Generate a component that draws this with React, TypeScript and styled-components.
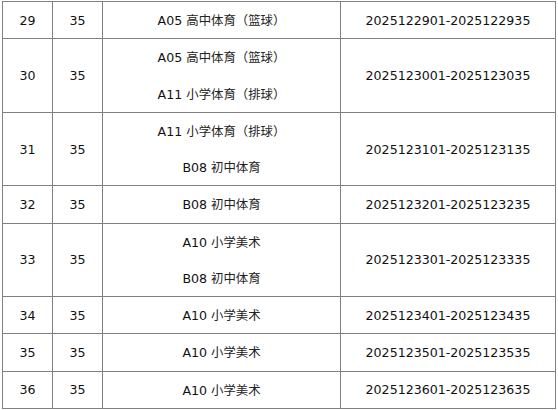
import React from "react";
import styled, { createGlobalStyle } from "styled-components";

interface Subject {
  code: string;
  name: string;
}

interface Row {
  no: number;
  count: number;
  subjects: Subject[];
  range: string;
}

const s = (code: string, name: string): Subject => ({ code, name });

const rows: Row[] = [
  { no: 29, count: 35, subjects: [s("A05", "高中体育（篮球）")], range: "2025122901-2025122935" },
  { no: 30, count: 35, subjects: [s("A05", "高中体育（篮球）"), s("A11", "小学体育（排球）")], range: "2025123001-2025123035" },
  { no: 31, count: 35, subjects: [s("A11", "小学体育（排球）"), s("B08", "初中体育")], range: "2025123101-2025123135" },
  { no: 32, count: 35, subjects: [s("B08", "初中体育")], range: "2025123201-2025123235" },
  { no: 33, count: 35, subjects: [s("A10", "小学美术"), s("B08", "初中体育")], range: "2025123301-2025123335" },
  { no: 34, count: 35, subjects: [s("A10", "小学美术")], range: "2025123401-2025123435" },
  { no: 35, count: 35, subjects: [s("A10", "小学美术")], range: "2025123501-2025123535" },
  { no: 36, count: 35, subjects: [s("A10", "小学美术")], range: "2025123601-2025123635" },
];

const GlobalStyle = createGlobalStyle`
  html, body {
    margin: 0;
    padding: 0;
    background: #ffffff;
  }
`;

const Page = styled.div`
  padding: 1px 0 0 2px;
`;

const Sheet = styled.table`
  width: 553px;
  table-layout: fixed;
  border-collapse: collapse;
  font-family: "DejaVu Sans", "Noto Sans CJK SC", sans-serif;
  font-size: 12.6px;
  color: #111;
`;

const Col = styled.col<{ $w: number }>`
  width: ${(p) => p.$w}px;
`;

const Row = styled.tr``;

const Cell = styled.td<{ $strong?: boolean }>`
  border: 1px solid #808080;
  border-left-color: ${(p) => (p.$strong ? "#666" : "#808080")};
  height: 36px;
  padding: 0;
  text-align: center;
  vertical-align: middle;
  white-space: nowrap;
`;

const Line = styled.div`
  height: 36.25px;
  line-height: 36.25px;
`;

const Zh = styled.span`
  font-family: "Noto Sans CJK TC", "Noto Sans CJK SC", sans-serif;
  font-size: 12.4px;
  color: #222;
  text-spacing-trim: space-all;
`;

export default function App() {
  return (
    <Page>
      <GlobalStyle />
      <Sheet>
        <colgroup>
          <Col $w={50} />
          <Col $w={50} />
          <Col $w={238} />
          <Col $w={215} />
        </colgroup>
        <tbody>
          {rows.map((r) => (
            <Row key={r.no}>
              <Cell>{r.no}</Cell>
              <Cell>{r.count}</Cell>
              <Cell $strong>
                {r.subjects.map((sub) => (
                  <Line key={sub.code}>
                    {sub.code} <Zh>{sub.name}</Zh>
                  </Line>
                ))}
              </Cell>
              <Cell>{r.range}</Cell>
            </Row>
          ))}
        </tbody>
      </Sheet>
    </Page>
  );
}
